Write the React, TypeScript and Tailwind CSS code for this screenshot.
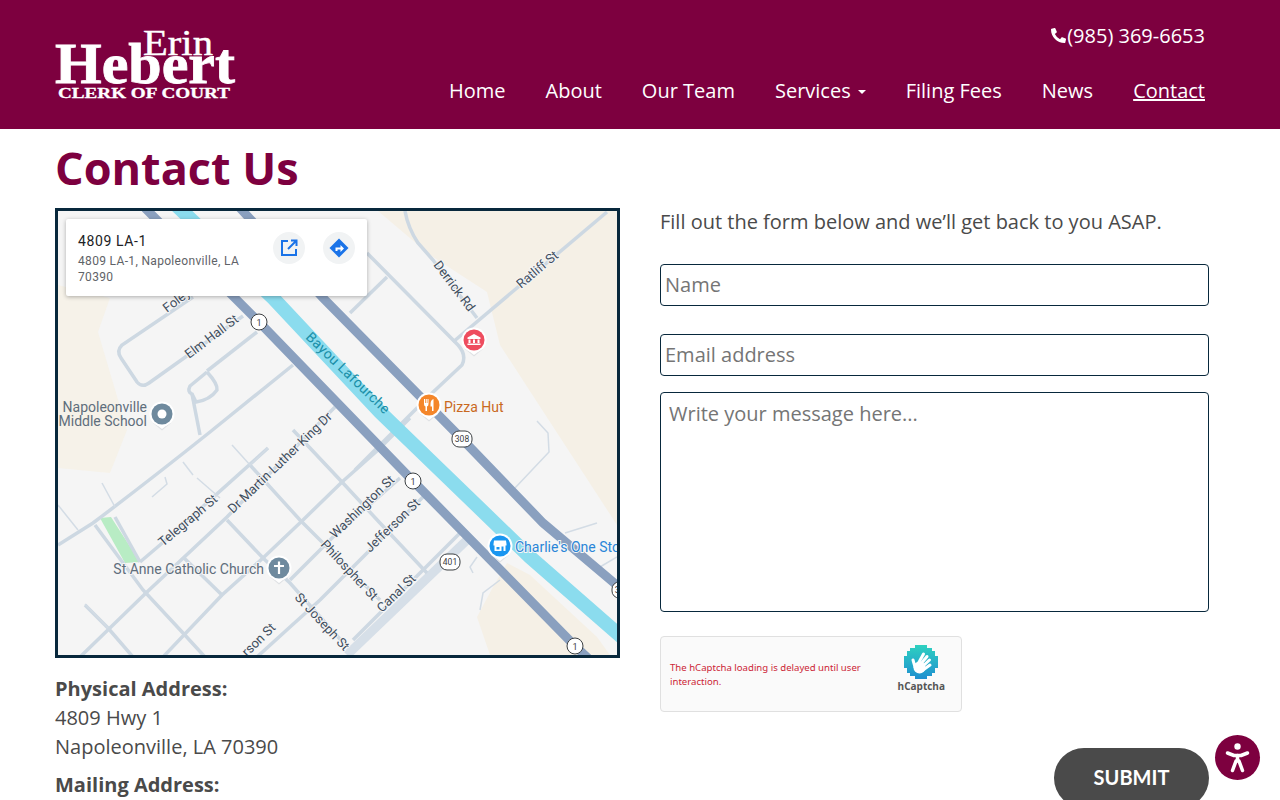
import { FaPhoneAlt } from 'react-icons/fa';

const navItems = ['Home', 'About', 'Our Team', 'Services', 'Filing Fees', 'News', 'Contact'];

// street lines in page coordinates, the svg viewBox is offset to match
const streets = [
  'M193 297L122 345Q116 351 121 358L137 382Q142 388 149 383L243 316',
  'M207 371L257 332',
  'M207 372L190 386Q187 392 192 394L196 402Q210 400 217 390Q218 384 207 372',
  'M192 394L200 435',
  'M293 365L210 432Q150 480 93 523L58 545',
  'M140 562L160 545L268 448',
  'M80 657L147 592L227 517L335 407',
  'M163 657L222 595L263 558L303 520L342 482L378 450L410 418',
  'M290 580L333 537L400 478',
  'M257 657L290 627L320 600L370 550L423 497',
  'M95 525L143 590L183 633L205 657',
  'M85 605L108 628L133 657',
  'M115 517L140 562',
  'M227 520L263 558L290 583L347 647',
  'M183 557L222 595',
  'M250 465L300 520L323 543L380 600',
  'M293 430L342 482L380 523L427 573',
  'M453 342L607 212',
  'M405 211Q408 228 418 243L433 260L477 318',
  'M367 253L458 345Q467 355 462 365L430 395L393 432L355 470',
  'M387 277L350 313',
  'M353 640L460 533',
];

const thinStreets = [
  'M232 445L250 465L268 448',
  'M102 483L115 507',
  'M183 462L193 475',
  'M197 478L220 498',
  'M58 505L78 530',
  'M152 497L167 484L165 477',
  'M537 421L548 433L549 452L515 488',
  'M565 533L597 523',
  'M473 573L470 567L477 557',
  'M480 610L483 593L500 580',
  'M600 567L617 557',
  'M85 604L108 628',
];

const labels = [
  { t: 'Foley', x: 167, y: 313, r: -37 },
  { t: 'Elm Hall St', x: 189, y: 359, r: -37 },
  { t: 'Derrick Rd', x: 433, y: 265, r: 53 },
  { t: 'Ratliff St', x: 521, y: 289, r: -40 },
  { t: 'Telegraph St', x: 163, y: 547, r: -40 },
  { t: 'Dr Martin Luther King Dr', x: 233, y: 514, r: -44 },
  { t: 'Washington St', x: 335, y: 539, r: -44 },
  { t: 'Jefferson St', x: 370, y: 553, r: -44 },
  { t: 'Philospher St', x: 320, y: 545, r: 47 },
  { t: 'St Joseph St', x: 294, y: 598, r: 47 },
  { t: 'Canal St', x: 382, y: 613, r: -44 },
  { t: 'rson St', x: 247, y: 657, r: -44 },
];

function MapPin({ x, y, color, children }: { x: number; y: number; color: string; children?: React.ReactNode }) {
  return (
    <g transform={`translate(${x} ${y})`}>
      <path d="M-9 9L0 16.500L9 9Z" fill="#dfe1e4" />
      <path d="M-9 8L0 15L9 8Z" fill="#fff" />
      <circle r="12.5" fill="#fff" />
      <circle r="10.5" fill={color} />
      {children}
    </g>
  );
}

function RouteBadge({ x, y, label }: { x: number; y: number; label: string }) {
  if (label.length === 1) {
    return (
      <g>
        <circle cx={x} cy={y} r="8" fill="#fff" stroke="#3c4043" strokeWidth="1" />
        <text x={x} y={y + 3.5} textAnchor="middle" fontSize="9" fill="#3c4043" fontFamily="Roboto, sans-serif">{label}</text>
      </g>
    );
  }
  return (
    <g>
      <rect x={x - 10} y={y - 8} width="20" height="16" rx="7" fill="#fff" stroke="#3c4043" strokeWidth="1" />
      <text x={x} y={y + 3} textAnchor="middle" fontSize="8.5" fill="#3c4043" fontFamily="Roboto, sans-serif">{label}</text>
    </g>
  );
}

function MapDrawing() {
  return (
    <svg viewBox="58 211 559 444" className="block w-full h-full" style={{ fontFamily: 'Roboto, sans-serif' }}>
      <rect x="58" y="211" width="559" height="444" fill="#f5f5f5" />
      <path d="M378 211L430 255L487 292L500 345L537 402L617 525V211Z" fill="#f5f0e6" />
      <path d="M58 285L110 298L98 332L127 430L110 473L58 468Z" fill="#f6f2e9" />
      <path d="M493 587L507 563L530 575L597 637L610 655H490L477 617Z" fill="#f5f0e6" />
      <path d="M100 518L111 517L140 562L125 563Z" fill="#b8ecc4" />
      <path d="M347 655L467 540" stroke="#d6dfe8" strokeWidth="9" fill="none" />
      {streets.map((d, i) => (
        <path key={i} d={d} stroke="#cdd8e2" strokeWidth="3.5" fill="none" />
      ))}
      {thinStreets.map((d, i) => (
        <path key={i} d={d} stroke="#d3dce5" strokeWidth="1.5" fill="none" />
      ))}
      <path d="M176 205L273 298L380 412L530 557L625 640" stroke="#8bdcee" strokeWidth="14" fill="none" />
      <path d="M145 208L259 322L413 481L575 646L590 660" stroke="#8aa0bf" strokeWidth="9" fill="none" />
      <path d="M240 208L323 298L462 439L543 523L625 592" stroke="#8aa0bf" strokeWidth="9" fill="none" />

      {labels.map(l => (
        <text key={l.t} transform={`translate(${l.x} ${l.y}) rotate(${l.r})`} fontSize="13" fill="#3f4e5e" stroke="#f5f5f5" strokeWidth="2" paintOrder="stroke">{l.t}</text>
      ))}
      <text transform="translate(305 338) rotate(44)" fontSize="14" fill="#1a8fa8" letterSpacing="0.4">Bayou Lafourche</text>

      <RouteBadge x={259} y={322} label="1" />
      <RouteBadge x={413} y={481} label="1" />
      <RouteBadge x={575} y={646} label="1" />
      <RouteBadge x={462} y={439} label="308" />
      <RouteBadge x={450} y={562} label="401" />
      <RouteBadge x={622} y={590} label="308" />

      <MapPin x={162} y={414} color="#6f8a9e"><circle r="4.5" fill="#fff" /></MapPin>
      <text x="147" y="412" textAnchor="end" fontSize="14" fill="#5f6e7c">Napoleonville</text>
      <text x="147" y="426" textAnchor="end" fontSize="14" fill="#5f6e7c">Middle School</text>

      <MapPin x={474} y={340} color="#ee4d5f">
        <path d="M0 -6L6.500 -2.500V-1H-6.500V-2.500ZM-5.500 -.5H-3.500V3H-5.500ZM-1 -.5H1V3H-1ZM3.500 -.5H5.500V3H3.500ZM-6.500 3.500H6.500V5H-6.500Z" fill="#fff" />
      </MapPin>

      <MapPin x={429} y={405} color="#f4862a">
        <path d="M-5 -6V-1Q-5 1 -3.500 1.500V6H-2V1.500Q-.5 1 -.5 -1V-6H-1.500V-2H-2.250V-6H-3.250V-2H-4V-6ZM4.500 -6Q1.500 -5 1.500 -1V1.500H3V6H4.500Z" fill="#fff" />
      </MapPin>
      <text x="444" y="412" fontSize="14" fill="#c9691e">Pizza Hut</text>

      <MapPin x={500} y={546} color="#1a96f0">
        <path d="M-6 -5.500H6L6.500 -2V-.5H5.500V5H-5.500V-.5H-6.500V-2ZM-3.500 1V3.500H-.5V1ZM1.500 .5V5H3.500V.5Z" fill="#fff" />
      </MapPin>
      <text x="515" y="552" fontSize="14" fill="#2a86d8" stroke="#f5f5f5" strokeWidth="2" paintOrder="stroke">Charlie's One Stop</text>

      <MapPin x={279} y={568} color="#6f8a9e">
        <path d="M-1.100 -6.500H1.100V-3H5V-1H1.100V6H-1.100V-1H-5V-3H-1.100Z" fill="#fff" />
      </MapPin>
      <text x="264" y="574" textAnchor="end" fontSize="14" fill="#5f6e7c" stroke="#f5f5f5" strokeWidth="2" paintOrder="stroke">St Anne Catholic Church</text>
    </svg>
  );
}

function MapCard() {
  return (
    <div className="absolute left-[8px] top-[8px] w-[301px] h-[77px] bg-white rounded-[2px] shadow-[0_1px_4px_rgba(0,0,0,0.3)] pl-[12px] pt-[13px] flex justify-between font-['Roboto',sans-serif]">
      <div className="w-[178px] pt-[1px]">
        <div className="text-[14px] leading-[16px] tracking-[0.6px] text-[#202124]">4809 LA-1</div>
        <div className="text-[12px] leading-[16px] tracking-[0.33px] mt-[4px] text-[#5f6368]">4809 LA-1, Napoleonville, LA 70390</div>
      </div>
      <div className="flex gap-[18px] pr-[12px]">
        <div className="w-[32px] h-[32px] rounded-full bg-[#f1f3f4] flex items-center justify-center">
          <svg width="18" height="18" viewBox="0 0 18 18" fill="none" stroke="#1a73e8" strokeWidth="2">
            <path d="M8 2H2V16H16V10" />
            <path d="M11 1.500H16.500V7M16 2L8 10" />
          </svg>
        </div>
        <div className="w-[32px] h-[32px] rounded-full bg-[#f1f3f4] flex items-center justify-center">
          <svg width="20" height="20" viewBox="0 0 20 20">
            <path d="M10 .5L19.500 10L10 19.500L.5 10Z" fill="#1a73e8" />
            <path d="M6.500 13V9.500H11.500V7L15 10.500L11.500 14V11.500H8.500V13Z" fill="#fff" />
          </svg>
        </div>
      </div>
    </div>
  );
}

function Logo() {
  return (
    <svg width="182" height="72" viewBox="0 0 182 72" className="block" style={{ fontFamily: '"Liberation Serif", serif', fontWeight: 700 }} fill="#fff">
      <text x="88" y="25" fontSize="35" textLength="70" lengthAdjust="spacingAndGlyphs" fontWeight="400" stroke="#fff" strokeWidth="0.4">Erin</text>
      <text x="0" y="53" fontSize="58" textLength="180" lengthAdjust="spacingAndGlyphs" stroke="#fff" strokeWidth="0.8">Hebert</text>
      <text x="3" y="67.500" fontSize="15" textLength="172" lengthAdjust="spacingAndGlyphs" stroke="#fff" strokeWidth="0.3">CLERK OF COURT</text>
    </svg>
  );
}

function HCaptchaMark() {
  return (
    <svg width="34" height="34" viewBox="0 0 34 34">
      <defs>
        <linearGradient id="hc" x1="0" y1="0" x2="0" y2="1">
          <stop offset="0" stopColor="#2ed1c0" />
          <stop offset="1" stopColor="#1f8fd0" />
        </linearGradient>
      </defs>
      <path d="M11 0H23V3H28V6H31V11H34V23H31V28H28V31H23V34H11V31H6V28H3V23H0V11H3V6H6V3H11Z" fill="url(#hc)" />
      <g stroke="#fff" strokeWidth="3" strokeLinecap="round" fill="none">
        <path d="M14 19L19.500 9" />
        <path d="M16 20L23 11.500" />
        <path d="M18 22L25.500 15" />
        <path d="M19 25L26 20" />
        <path d="M11 22L9 15" />
      </g>
      <circle cx="15.500" cy="22.500" r="6" fill="#fff" />
    </svg>
  );
}

export default function App() {
  return (
    <div className="relative h-[800px] overflow-hidden bg-white font-['Open_Sans',sans-serif] text-[#4a4a4a]">
      {/* HEADER */}
      <header className="h-[129px] bg-[#7d003f] flex justify-between pl-[55px] pr-[75px]">
        <div className="pt-[30px]"><Logo /></div>
        <div className="flex flex-col items-end pt-[22px]">
          <a className="flex items-center text-white text-[20px] leading-[27px]">
            <FaPhoneAlt size={15} className="mr-[1px]" />(985) 369-6653
          </a>
          <nav className="flex gap-[40px] mt-[28px] text-white text-[20px] leading-[27px]">
            {navItems.map(item => (
              <a key={item} className={`flex items-center ${item === 'Contact' ? 'underline' : ''}`}>
                {item}
                {item === 'Services' && <span className="ml-[7px] mt-[3px] w-0 h-0 border-x-[4px] border-x-transparent border-t-[4px] border-t-white" />}
              </a>
            ))}
          </nav>
        </div>
      </header>

      {/* BODY */}
      <main className="pl-[55px]">
        <h1 className="text-[45px] leading-[60px] font-bold text-[#7d003f] mt-[9px]">Contact Us</h1>
        <div className="flex gap-[40px] mt-[10px]">
          <div className="w-[565px]">
            <div className="relative h-[450px] border-[3px] border-[#08283c]">
              <MapDrawing />
              <MapCard />
            </div>
            <div className="mt-[16px] text-[20px] leading-[29px]">
              <div className="font-bold">Physical Address:</div>
              <div>4809 Hwy 1</div>
              <div>Napoleonville, LA 70390</div>
              <div className="font-bold mt-[9px]">Mailing Address:</div>
            </div>
          </div>

          <form className="w-[549px] flex flex-col">
            <p className="text-[20px] leading-[27px]">Fill out the form below and we’ll get back to you ASAP.</p>
            <input placeholder="Name" className="mt-[29px] h-[42px] px-[4px] pb-[2px] border border-[#08283c] rounded-[4px] text-[20px] placeholder:text-[#757575] outline-none" />
            <input placeholder="Email address" className="mt-[28px] h-[42px] px-[4px] pb-[2px] border border-[#08283c] rounded-[4px] text-[20px] placeholder:text-[#757575] outline-none" />
            <textarea placeholder="Write your message here..." className="mt-[16px] h-[220px] px-[8px] py-[6px] border border-[#08283c] rounded-[4px] text-[20px] leading-[30px] placeholder:text-[#757575] outline-none resize-none" />
            <div className="mt-[24px] w-[302px] h-[76px] bg-[#fafafa] border border-[#e0e0e0] rounded-[4px] flex items-center justify-between pl-[9px] pr-[16px]">
              <div className="w-[205px] text-[9.600px] leading-[14px] text-[#cc2536] font-['Noto_Sans',sans-serif] mt-[2px]">The hCaptcha loading is delayed until user interaction.</div>
              <div className="flex flex-col items-center mt-[-10px]">
                <HCaptchaMark />
                <div className="text-[10px] leading-[14px] font-bold text-[#555]">hCaptcha</div>
              </div>
            </div>
            <div className="flex justify-end mt-[36px]">
              <button type="button" className="w-[155px] h-[60px] pb-[2px] rounded-[30px] bg-[#4a4a4a] text-white text-[20px] font-bold font-['Lato',sans-serif]">SUBMIT</button>
            </div>
          </form>
        </div>
      </main>

      {/* accessibility widget */}
      <div className="absolute left-[1215px] top-[735px] w-[45px] h-[45px] rounded-full bg-[#7d003f]">
        <svg width="45" height="45" viewBox="0 0 45 45" fill="none" stroke="#fff" strokeWidth="3.500" strokeLinecap="round" strokeLinejoin="round">
          <circle cx="22.500" cy="11.500" r="3.200" fill="#fff" stroke="none" />
          <path d="M12.500 18L19 20.500H26L32.500 18" />
          <path d="M22.500 20.500V26" />
          <path d="M21 26L17.500 35.500M24 26L27.500 35.500" />
        </svg>
      </div>
    </div>
  );
}
